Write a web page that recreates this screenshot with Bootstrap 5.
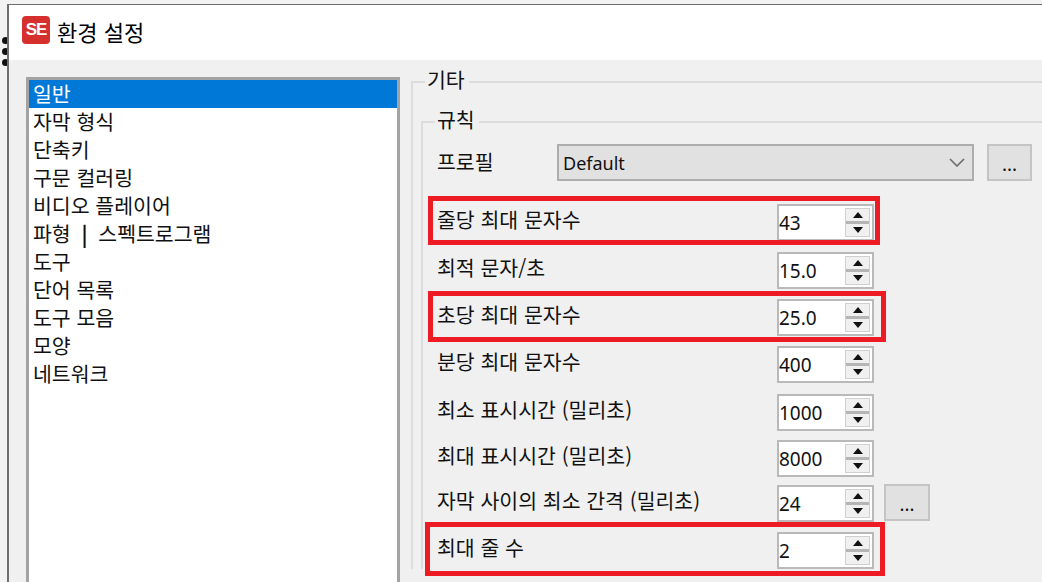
<!DOCTYPE html>
<html lang="ko">
<head>
    <meta charset="UTF-8">
    <meta name="viewport" content="width=device-width, initial-scale=1.0">
    <title>환경 설정</title>
    <link href="https://cdn.jsdelivr.net/npm/bootstrap@5.3.2/dist/css/bootstrap.min.css" rel="stylesheet">
    <style>
        html, body { height: 582px; overflow: hidden; }
        body {
            background: #f3f3f3;
            color: #111;
            font-family: "Noto Sans CJK KR", "Noto Sans", sans-serif;
            font-size: 20.5px;
            line-height: 28px;
        }
        .page-shell { width: 1200px; height: 582px; padding-top: 4px; }
        .dots-gutter { width: 7px; padding-top: 33px; overflow: hidden; flex: none; }
        .dot-mark { width: 7px; height: 7px; margin: 0 0 4px 2px; border-radius: 50%; background: #111; }
        .app-window { flex: 1; border: solid #6f6f6f; border-width: 1px 0 0 2px; background: #f0f0f0; }
        .title-strip { height: 55px; background: #fff; padding: 0 0 4px 13px; }
        .app-logo {
            width: 28px; height: 28px; margin-top: -1px; border-radius: 4px; background: #d5302e; color: #fff;
            font: bold 17px/28px "Liberation Sans", sans-serif; text-align: center; letter-spacing: -1px;
        }
        .title-text { font-size: 22px; margin-left: 7px; color: #000; }
        .window-body { padding: 17px 0 0 17px; }
        .page-list {
            width: 374px; height: 520px; flex: none; background: #fff;
            border: 3px solid #a3a3a3; border-radius: 0; padding: 0; display: block;
        }
        .page-list .list-group-item {
            border: 0; border-radius: 0; padding: 0 4px; height: 28px; line-height: 26px; background: transparent; color: #111;
        }
        .page-list .list-group-item.active { background: #0078d7; color: #fff; }
        .bar-glyph { font-weight: bold; margin: 0 5px; }
        .settings-col { flex: 1; margin: -11px 0 0 11px; }
        .group-box { border: solid #dcdcdc; border-width: 2px 0 0 2px; padding: 9px 0 0 8px; min-width: 0; margin: 0; }
        .group-box legend {
            float: none; width: auto; font-size: 20.5px; line-height: 26px; margin: 0 0 0 4px;
            padding: 0 4px 5px 2px;
        }
        .group-box .group-box { padding: 7px 0 0 14px; }
        .group-box .group-box legend { margin-left: -2px; }
        .rule-grid { display: grid; grid-template-rows: 60px 48px 47px 47px 48px 46px 45px 47px 37px; }
        .rule-row { height: 37px; }
        .rule-label { width: 120px; flex: none; padding-bottom: 3px; }
        .spin-label { width: 340px; flex: none; padding-bottom: 7px; }
        .combo-box {
            width: 417px; height: 37px; background: #e1e1e1; border: 2px solid #adadad;
            padding: 0 7px 0 4px; font-family: "Noto Sans", sans-serif; font-size: 18px;
        }
        .dots-btn {
            width: 46px; height: 37px; padding: 0; background: #e1e1e1; border: 2px solid #c4c4c4; border-radius: 0;
            color: #111; font-size: 18px; line-height: 1;
        }
        .combo-btn { margin-left: 13px; width: 45px; }
        .gap-btn { margin: -2px 0 0 10px; }
        .spin-box {
            width: 97px; height: 37px; background: #fff; border: 2px solid #b9b9b9; padding: 0 2px 0 0;
            font-family: "Noto Sans", sans-serif; font-size: 19px; flex: none;
        }
        .spin-value { flex: 1; }
        .spin-arrows { width: 25px; height: 29px; background: #f0f0f0; border: 1px solid #d0d0d0; }
        .arrow-slot { height: 12px; }
        .spin-sep { height: 3px; background: #b5b5b5; }
        .red-mark { position: absolute; border: 5px solid #ed1c24; pointer-events: none; }
        .mark-one { left: -9px; top: -8px; width: 452px; height: 49px; }
        .mark-two { left: -9px; top: -8px; width: 458px; height: 51px; }
        .mark-three { left: -12px; top: -10px; width: 460px; height: 54px; }
    </style>
</head>
<body>
<div class="page-shell d-flex">
    <div class="dots-gutter">
        <div class="dot-mark"></div>
        <div class="dot-mark"></div>
        <div class="dot-mark"></div>
    </div>
    <div class="app-window">
        <div class="title-strip d-flex align-items-center">
            <span class="app-logo">SE</span>
            <span class="title-text">환경 설정</span>
        </div>
        <div class="window-body d-flex">
            <div class="list-group page-list">
                <a class="list-group-item active">일반</a>
                <a class="list-group-item">자막 형식</a>
                <a class="list-group-item">단축키</a>
                <a class="list-group-item">구문 컬러링</a>
                <a class="list-group-item">비디오 플레이어</a>
                <a class="list-group-item">파형 <span class="bar-glyph">|</span> 스펙트로그램</a>
                <a class="list-group-item">도구</a>
                <a class="list-group-item">단어 목록</a>
                <a class="list-group-item">도구 모음</a>
                <a class="list-group-item">모양</a>
                <a class="list-group-item">네트워크</a>
            </div>
            <div class="settings-col">
                <fieldset class="group-box">
                    <legend>기타</legend>
                    <fieldset class="group-box">
                        <legend>규칙</legend>
                        <div class="rule-grid" id="ruleGrid">
                            <div class="rule-row d-flex align-items-center">
                                <span class="rule-label">프로필</span>
                                <div class="combo-box d-flex align-items-center justify-content-between">
                                    <span>Default</span>
                                    <svg width="16" height="9" viewBox="0 0 16 9"><path d="M1 1l7 7 7-7" fill="none" stroke="#6a6a6a" stroke-width="1.6"/></svg>
                                </div>
                                <button type="button" class="btn dots-btn combo-btn">...</button>
                            </div>
                        </div>
                    </fieldset>
                </fieldset>
            </div>
        </div>
    </div>
</div>

<script>
    const rules = [
        { label: '줄당 최대 문자수', value: '43', mark: 'mark-one' },
        { label: '최적 문자/초', value: '15.0' },
        { label: '초당 최대 문자수', value: '25.0', mark: 'mark-two' },
        { label: '분당 최대 문자수', value: '400' },
        { label: '최소 표시시간 (밀리초)', value: '1000' },
        { label: '최대 표시시간 (밀리초)', value: '8000' },
        { label: '자막 사이의 최소 간격 (밀리초)', value: '24', extra: true },
        { label: '최대 줄 수', value: '2', mark: 'mark-three' }
    ];
    const up = '<svg width="10" height="6" viewBox="0 0 10 6"><path d="M5 0l5 6H0z" fill="#111"/></svg>';
    const down = '<svg width="10" height="6" viewBox="0 0 10 6"><path d="M0 0h10L5 6z" fill="#111"/></svg>';
    const grid = document.getElementById('ruleGrid');
    rules.forEach((r) => {
        const row = document.createElement('div');
        row.className = 'rule-row d-flex align-items-center position-relative';
        row.innerHTML =
            '<span class="spin-label">' + r.label + '</span>' +
            '<div class="spin-box d-flex align-items-center">' +
                '<span class="spin-value">' + r.value + '</span>' +
                '<div class="spin-arrows">' +
                    '<div class="arrow-slot d-flex align-items-center justify-content-center">' + up + '</div>' +
                    '<div class="spin-sep"></div>' +
                    '<div class="arrow-slot d-flex align-items-center justify-content-center">' + down + '</div>' +
                '</div>' +
            '</div>' +
            (r.extra ? '<button type="button" class="btn dots-btn gap-btn">...</button>' : '') +
            (r.mark ? '<div class="red-mark ' + r.mark + '"></div>' : '');
        grid.appendChild(row);
    });
</script>
<script src="https://cdn.jsdelivr.net/npm/bootstrap@5.3.2/dist/js/bootstrap.bundle.min.js"></script>
</body>
</html>
